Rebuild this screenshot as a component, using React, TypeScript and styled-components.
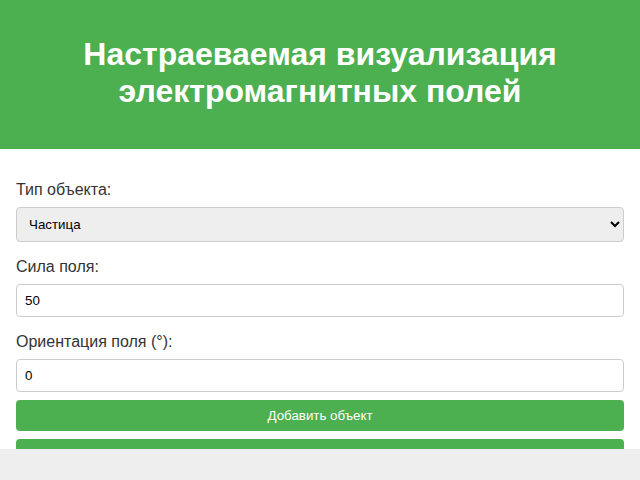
import styled, { createGlobalStyle } from "styled-components"

const GlobalStyle = createGlobalStyle`
  html, body {
    margin: 0;
    padding: 0;
    background: #eeeeee;
    font-family: "Liberation Sans", Arial, sans-serif;
  }
`

export default function App() {
  return (
    <>
      <GlobalStyle />
      <Header>
        <Title>Настраеваемая визуализация электромагнитных полей</Title>
      </Header>
      <Panel>
        <Field>
          <Label htmlFor="type">Тип объекта:</Label>
          <Select id="type" defaultValue="particle">
            <option value="particle">Частица</option>
            <option value="wire">Проводник</option>
            <option value="magnet">Магнит</option>
          </Select>
        </Field>
        <Field>
          <Label htmlFor="strength">Сила поля:</Label>
          <Input id="strength" type="number" defaultValue={50} />
        </Field>
        <Field>
          <Label htmlFor="angle">Ориентация поля (°):</Label>
          <Input id="angle" type="number" defaultValue={0} />
        </Field>
        <Button>Добавить объект</Button>
        <Button>Очистить</Button>
      </Panel>
    </>
  )
}

const Header = styled.header`
  background: #4caf50;
  color: #ffffff;
  padding: 36px 20px 39px;
  text-align: center;
`

const Title = styled.h1`
  margin: 0 auto;
  max-width: 520px;
  font-size: 32px;
  font-weight: bold;
`

const Panel = styled.main`
  background: #ffffff;
  height: 300px;
  overflow: hidden;
  box-sizing: border-box;
  padding: 16px 16px;
  display: flex;
  flex-direction: column;
`

const Field = styled.div`
  display: flex;
  flex-direction: column;
  margin-top: 16px;
`

const Label = styled.label`
  font-size: 16px;
  color: #333333;
  margin-bottom: 8px;
`

const Select = styled.select`
  height: 35px;
  border: 1px solid #cccccc;
  border-radius: 4px;
  background: #eeeeee;
  padding: 0 8px;
  font-family: "Liberation Sans", Arial, sans-serif;
  font-size: 13.33px;
  color: #000000;
`

const Input = styled.input`
  height: 33px;
  box-sizing: border-box;
  border: 1px solid #cccccc;
  border-radius: 4px;
  padding: 0 8px;
  font-family: "Liberation Sans", Arial, sans-serif;
  font-size: 13.33px;
  color: #000000;
  background: #ffffff;

  &::-webkit-inner-spin-button,
  &::-webkit-outer-spin-button {
    -webkit-appearance: none;
    margin: 0;
  }
`

const Button = styled.button`
  margin-top: 8px;
  flex-shrink: 0;
  height: 31px;
  border: none;
  border-radius: 4px;
  background: #4caf50;
  color: #ffffff;
  font-family: "Liberation Sans", Arial, sans-serif;
  font-size: 13.33px;
  cursor: pointer;

  &:hover {
    background: #45a049;
  }
`
